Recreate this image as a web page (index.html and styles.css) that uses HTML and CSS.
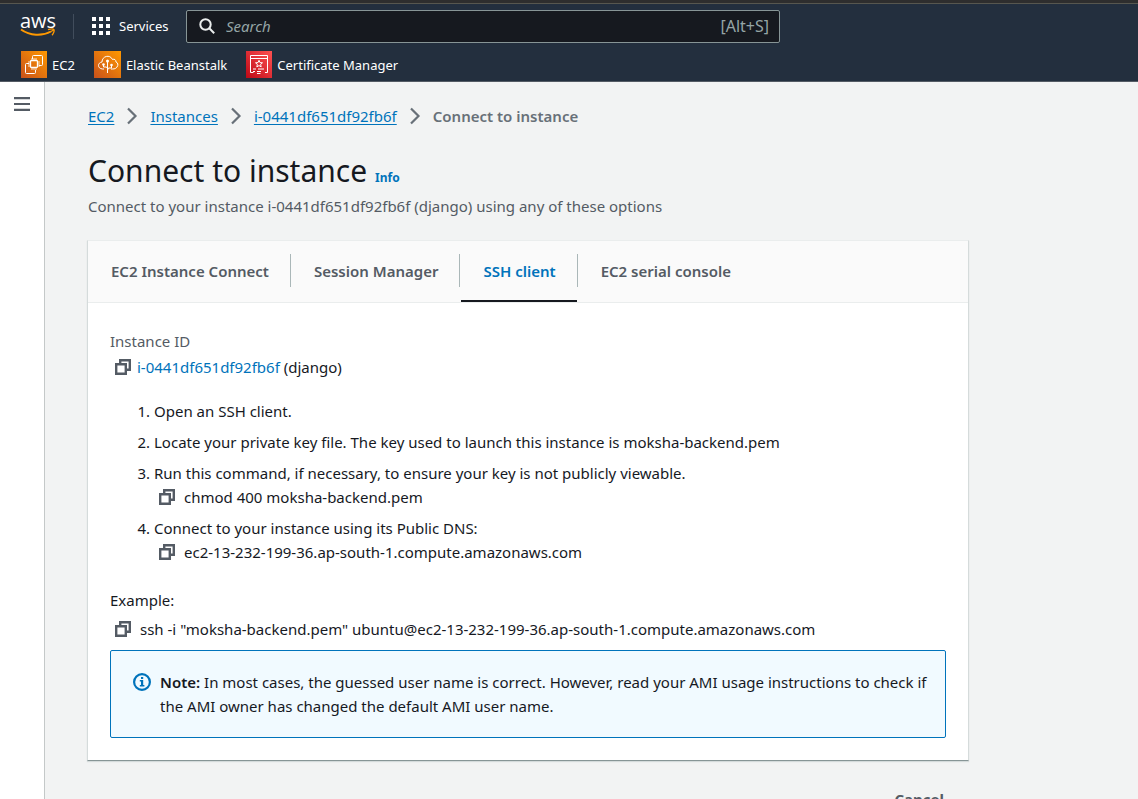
FILE: index.html
```html
<!DOCTYPE html>
<html lang="en">
<head>
<meta charset="utf-8">
<title>Connect to instance | EC2</title>
<meta name="viewport" content="width=device-width, initial-scale=1">
<link rel="stylesheet" href="styles.css">
</head>
<body>
<svg class="defs" aria-hidden="true">
  <defs>
    <linearGradient id="orange" x1="0" y1="1" x2="1" y2="0"><stop offset="0" stop-color="#c8511b"/><stop offset="1" stop-color="#ff9900"/></linearGradient>
    <linearGradient id="red" x1="0" y1="1" x2="1" y2="0"><stop offset="0" stop-color="#bd0816"/><stop offset="1" stop-color="#ff5252"/></linearGradient>
    <symbol id="copy" viewBox="0 0 16 16"><path d="M1.200 5.200h9.600v9.600H1.200zM5.200 4.500V1.200h9.600v9.600H11" fill="none" stroke="currentColor" stroke-width="2.400"/></symbol>
    <symbol id="chevron" viewBox="0 0 12 18"><path d="M2 1.500l7.500 7.500L2 16.500" fill="none" stroke="currentColor" stroke-width="2.200"/></symbol>
  </defs>
</svg>
<header class="header">
  <div class="topbar">
    <a class="logo" href="#" aria-label="AWS home">
      <span class="logo-text">aws</span>
      <svg class="logo-smile" viewBox="0 0 36 9" aria-hidden="true"><path d="M1 1.500C10 8 22 8.500 31 3.500" fill="none" stroke="#ff9900" stroke-width="2"/><path d="M28 1.700c3-1 5.500-.7 6 0 .5 1-.5 4-2 5.500M31 3.500l2.500-1.500" fill="none" stroke="#ff9900" stroke-width="1.300"/></svg>
    </a>
    <button class="services" type="button">
      <svg width="18" height="18" viewBox="0 0 18 18" fill="#fff" aria-hidden="true"><rect width="4" height="4"/><rect x="7" width="4" height="4"/><rect x="14" width="4" height="4"/><rect y="7" width="4" height="4"/><rect x="7" y="7" width="4" height="4"/><rect x="14" y="7" width="4" height="4"/><rect y="14" width="4" height="4"/><rect x="7" y="14" width="4" height="4"/><rect x="14" y="14" width="4" height="4"/></svg>
      Services
    </button>
    <label class="search">
      <svg width="16" height="16" viewBox="0 0 16 16" fill="none" stroke="#eaeded" stroke-width="2" aria-hidden="true"><circle cx="6.500" cy="6.500" r="5.200"/><path d="M10.300 10.300l4.900 4.900"/></svg>
      <input class="search-input" type="text" placeholder="Search" aria-label="Search">
      <span class="shortcut">[Alt+S]</span>
    </label>
  </div>
  <nav class="favorites" aria-label="Favorites">
    <a class="favorite" href="#">
      <svg width="26" height="27" viewBox="0 0 26 27" fill="none" stroke="#fff" aria-hidden="true"><rect width="26" height="27" fill="url(#orange)" stroke="none"/><path d="M11.500 8V5.500q0-1 1-1h8q1 0 1 1v8q0 1-1 1H18M8 12.500H5.500q-1 0-1 1v8q0 1 1 1h8q1 0 1-1V19"/><rect x="9.500" y="9.500" width="7" height="7" rx="1" stroke-width="1.300"/><path d="M11 7v2M13 7v2M15 7v2M11 17v2M13 17v2M15 17v2M7 11h2M7 13h2M7 15h2M17 11h2M17 13h2M17 15h2" stroke-width=".8"/></svg>
      EC2
    </a>
    <a class="favorite" href="#">
      <svg width="27" height="27" viewBox="0 0 27 27" fill="none" stroke="#fff" aria-hidden="true"><rect width="27" height="27" fill="url(#orange)" stroke="none"/><path d="M10 18H8.500C3 17.500 3.500 11.500 8 11c0-6 8-8 10.500-2.500 2-1 3.500.5 3.500 2.500 2 .7 2.500 3 1 5-.8 1.200-2 2-4.500 2H17"/><path d="M13.500 9.500V22M9.500 13.500v2.500h3l1 1.500M17.500 14v3h-3l-1 2"/><g fill="#fff" stroke="none"><circle cx="13.500" cy="10" r="1.500"/><circle cx="9.500" cy="13.500" r="1.300"/><circle cx="17.500" cy="14" r="1.300"/></g></svg>
      Elastic Beanstalk
    </a>
    <a class="favorite" href="#">
      <svg width="26" height="27" viewBox="0 0 26 27" fill="none" stroke="#fff" aria-hidden="true"><rect width="26" height="27" fill="url(#red)" stroke="none"/><path d="M7.500 21.500h-3v-17h17v17h-2.500M4.500 7.500h17M7 18h3M12 18h6M7 20.500h2M11 20.500h4M11 22.500h3.500"/><path d="M13 9.300l1 2.300 2.500.2-1.900 1.600.6 2.500-2.200-1.300-2.200 1.300.6-2.500-1.900-1.600 2.500-.2z"/></svg>
      Certificate Manager
    </a>
  </nav>
</header>
<div class="layout">
  <aside class="sidebar">
    <button class="menu" type="button" aria-label="Open navigation"><svg width="16" height="14" viewBox="0 0 16 14" fill="#545b64" aria-hidden="true"><path d="M0 0h16v2.200H0zM0 5.900h16v2.200H0zM0 11.800h16V14H0z"/></svg></button>
  </aside>
  <main class="main">
    <div class="content">
      <nav class="breadcrumbs" aria-label="Breadcrumbs">
        <a href="#">EC2</a><svg class="chevron"><use href="#chevron"/></svg>
        <a href="#">Instances</a><svg class="chevron"><use href="#chevron"/></svg>
        <a href="#">i-0441df651df92fb6f</a><svg class="chevron"><use href="#chevron"/></svg>
        <span class="current">Connect to instance</span>
      </nav>
      <div class="heading">
        <h1 class="title">Connect to instance</h1>
        <a class="info" href="#">Info</a>
      </div>
      <p class="description">Connect to your instance i-0441df651df92fb6f (django) using any of these options</p>
      <section class="panel">
        <div class="tabs" role="tablist">
          <button class="tab" type="button" role="tab">EC2 Instance Connect</button>
          <button class="tab" type="button" role="tab">Session Manager</button>
          <button class="tab tab-active" type="button" role="tab" aria-selected="true">SSH client</button>
          <button class="tab" type="button" role="tab">EC2 serial console</button>
        </div>
        <div class="panel-body" role="tabpanel">
          <div class="label">Instance ID</div>
          <div class="copy-row instance">
            <button class="copy" type="button" aria-label="Copy instance ID"><svg class="copy-icon"><use href="#copy"/></svg></button>
            <span><a class="link" href="#">i-0441df651df92fb6f</a> (django)</span>
          </div>
          <ol class="steps">
            <li>Open an SSH client.</li>
            <li>Locate your private key file. The key used to launch this instance is moksha-backend.pem</li>
            <li>Run this command, if necessary, to ensure your key is not publicly viewable.
              <div class="copy-row command"><button class="copy" type="button" aria-label="Copy command"><svg class="copy-icon"><use href="#copy"/></svg></button><span>chmod 400 moksha-backend.pem</span></div>
            </li>
            <li>Connect to your instance using its Public DNS:
              <div class="copy-row command"><button class="copy" type="button" aria-label="Copy DNS name"><svg class="copy-icon"><use href="#copy"/></svg></button><span>ec2-13-232-199-36.ap-south-1.compute.amazonaws.com</span></div>
            </li>
          </ol>
          <div>Example:</div>
          <div class="copy-row command example"><button class="copy" type="button" aria-label="Copy example"><svg class="copy-icon"><use href="#copy"/></svg></button><span>ssh -i "moksha-backend.pem" ubuntu@ec2-13-232-199-36.ap-south-1.compute.amazonaws.com</span></div>
          <div class="note">
            <svg class="note-icon" viewBox="0 0 18 18" aria-hidden="true"><circle cx="9" cy="9" r="7.900" fill="none" stroke="#0073bb" stroke-width="2.200"/><path d="M8 4h2.200v2H8zM6.800 7h3.400v5h1.200v1.500H6.800V12H8V8.500H6.800z" fill="#0073bb"/></svg>
            <p class="note-text"><strong>Note:</strong> In most cases, the guessed user name is correct. However, read your AMI usage instructions to check if the AMI owner has changed the default AMI user name.</p>
          </div>
        </div>
      </section>
      <div class="actions"><button class="cancel" type="button">Cancel</button></div>
    </div>
  </main>
</div>
</body>
</html>
```
FILE: styles.css
```css
* { box-sizing: border-box; }
body {
  display: flex;
  flex-direction: column;
  height: 100vh;
  margin: 0;
  overflow: hidden;
  background: #f2f3f3;
  color: #16191f;
  font: 15px/24px "Noto Sans", "Open Sans", sans-serif;
}
button { padding: 0; border: 0; background: none; color: inherit; font: inherit; cursor: pointer; }
svg { flex: none; }
strong { font-weight: 600; }
.defs { position: absolute; width: 0; height: 0; }

.header {
  flex: none;
  border-top: 3px solid #2e2e2e;
  border-bottom: 1px solid #545b64;
  background: #232f3e;
  box-shadow: inset 0 1px #57574f;
  color: #fff;
  font-size: 13px;
}
.topbar { display: flex; align-items: center; height: 46px; padding-left: 20px; }
.logo { display: flex; flex-direction: column; width: 54px; height: 25px; border-right: 1px solid #414d5c; color: #fff; text-decoration: none; }
.logo-text { font: 500 20px/14px "Open Sans", sans-serif; }
.logo-smile { width: 36px; height: 9px; }
.services { display: flex; align-items: center; gap: 9px; width: 112px; padding-left: 18px; white-space: nowrap; }
.search { display: flex; align-items: center; flex: 0 1 594px; height: 33px; padding: 0 10px 0 12px; border: 1px solid #879596; border-radius: 2px; background: #16191f; }
.search-input { flex: 1; min-width: 0; padding: 0 11px; border: 0; outline: 0; background: none; color: #fff; font: 15px/24px "Noto Sans", sans-serif; }
.search-input::placeholder { color: #95a5a6; font-style: italic; opacity: 1; }
.shortcut { color: #95a5a6; font-size: 16px; }
.favorites { display: flex; gap: 19px; padding: 2px 21px 3px; }
.favorite { display: flex; align-items: center; gap: 5px; color: #fff; text-decoration: none; white-space: nowrap; }

.layout { display: flex; flex: 1; min-height: 0; }
.sidebar { flex: none; width: 45px; padding: 15px 14px; border-right: 1px solid #c4c8c8; background: #fff; }
.menu { display: flex; }
.main { flex: 1; min-width: 0; padding: 22px 43px 0 42px; overflow: hidden; }
.content { max-width: 882px; }
.breadcrumbs, .heading, .description { padding-left: 1px; }
.breadcrumbs { display: flex; align-items: center; gap: 12px; }
.breadcrumbs a { color: #0073bb; text-underline-offset: 2px; }
.chevron { width: 12px; height: 18px; color: #687078; }
.current { color: #687078; font-weight: 600; }
.heading { display: flex; align-items: baseline; gap: 8px; margin-top: 23px; }
.title { margin: 0; font-size: 30px; font-weight: 400; line-height: 40px; }
.info { color: #0073bb; font-size: 12px; font-weight: 700; text-decoration: none; }
.description { margin: 3px 0 22px; color: #545b64; }

.panel { border: 1px solid #d5dbdb; border-top-color: #eaeded; border-bottom-color: #879596; background: #fff; box-shadow: 0 1px 1px #d5dbdb; }
.tabs { display: flex; align-items: stretch; height: 62px; border-bottom: 1px solid #eaeded; background: #fafafa; }
.tab { position: relative; padding: 0 22px 2px 23px; color: #545b64; font-weight: 600; white-space: nowrap; }
.tab:not(:last-child)::after { content: ""; position: absolute; top: 13px; right: 0; width: 1px; height: 33px; background: #aab7b8; }
.tab-active { color: #0073bb; }
.tab-active::before { content: ""; position: absolute; right: 1px; bottom: 0; left: 1px; height: 2px; background: #16191f; }
.panel-body { padding: 26px 22px 22px; }
.label { color: #545b64; }
.copy-row { display: flex; align-items: center; padding-left: 5px; }
.copy { display: flex; color: #545b64; }
.copy-icon { width: 16px; height: 16px; }
.instance { gap: 6px; margin-top: 2px; }
.link { color: #0073bb; text-decoration: none; }
.command { gap: 9px; }
.steps { display: flex; flex-direction: column; gap: 7px; margin: 20px 0 24px; padding-left: 44px; }
.example { margin: 5px 0 9px; }
.note { display: flex; gap: 9px; padding: 19px 12px 19px 22px; border: 1px solid #0073bb; border-radius: 2px; background: #f1faff; }
.note-icon { width: 18px; height: 18px; margin-top: 3px; }
.note-text { margin: 0; }
.actions { display: flex; justify-content: flex-end; padding: 26px 25px; }
.cancel { color: #545b64; font-weight: 700; }
```
